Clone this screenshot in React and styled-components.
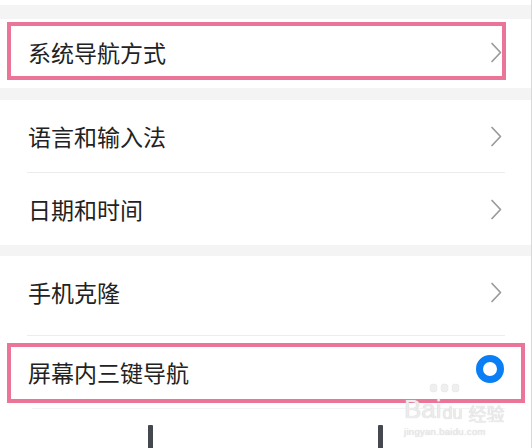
import styled, { createGlobalStyle } from 'styled-components';

const GlobalStyle = createGlobalStyle`
  html, body {
    margin: 0;
    padding: 0;
    background: #ffffff;
  }
  body {
    font-family: "Noto Sans CJK SC", "Noto Sans", sans-serif;
  }
`;

const Page = styled.div`
  position: relative;
  width: 532px;
  height: 448px;
  overflow: hidden;
  box-sizing: border-box;
  border-right: 1px solid #d9d9d9;
  background: #ffffff;
`;

const Gap = styled.div`
  height: ${(p) => p.h}px;
  background: #f4f4f4;
`;

const Card = styled.div`
  background: #ffffff;
  height: ${(p) => (p.h ? `${p.h}px` : 'auto')};
`;

const Row = styled.div`
  position: relative;
  height: ${(p) => p.h || 72}px;
  display: flex;
  align-items: center;
  justify-content: space-between;
  padding: 0 29px ${(p) => p.pb || 0}px 28px;
  box-sizing: border-box;
`;

const Label = styled.span`
  font-size: 23px;
  color: #222222;
  line-height: 1;
`;

const Divider = styled.div`
  height: 1px;
  margin: 0 26px 0 ${(p) => p.left || 27}px;
  background: ${(p) => p.color || '#ececec'};
`;

// pink annotation frame drawn over a row
const Highlight = styled.div`
  position: absolute;
  left: 7px;
  top: ${(p) => p.top}px;
  width: ${(p) => p.w}px;
  height: ${(p) => p.h}px;
  box-sizing: border-box;
  border: 4px solid #ea7599;
  pointer-events: none;
`;

const Radio = styled.span`
  width: 28px;
  height: 28px;
  box-sizing: border-box;
  border-radius: 50%;
  border: 7px solid #0a7ff5;
  margin-right: -2px;
  margin-top: -6px;
`;

const Preview = styled.div`
  display: flex;
  gap: 225px;
  padding: 16px 0 0 148px;
`;

const Bar = styled.div`
  width: 5px;
  height: 30px;
  background: #45484e;
  border-radius: 1px;
`;

const Watermark = styled.div`
  position: absolute;
  left: 404px;
  top: 384px;
  width: 110px;
  color: #ececec;
  font-family: "Liberation Sans", sans-serif;
  pointer-events: none;
  text-shadow: 0 0 1px #c8c8c8;
`;

const Paw = styled.div`
  display: flex;
  gap: 4px;
  padding-left: 26px;
  height: 12px;
`;

const Toe = styled.span`
  width: 7px;
  height: 8px;
  border-radius: 50%;
  background: #efefef;
  box-shadow: 0 0 1px #c8c8c8;
`;

const MarkLine = styled.div`
  display: flex;
  align-items: flex-end;
  gap: 1px;
  font-size: 26px;
  line-height: 1;
`;

const MarkDu = styled.span`
  font-size: 18px;
`;

const MarkCjk = styled.span`
  font-family: "Noto Sans CJK SC", sans-serif;
  font-size: 18px;
  margin-left: 5px;
`;

const MarkSub = styled.div`
  font-size: 9.5px;
  margin-top: 4px;
  letter-spacing: 0.3px;
`;

const Chevron = () => (
  <svg width="12" height="21" viewBox="0 0 12 21" fill="none">
    <path d="M2 1.5 L10.5 10.5 L2 19.5" stroke="#9a9a9a" strokeWidth="1.7" strokeLinecap="round" strokeLinejoin="round" />
  </svg>
);

export default function App() {
  return (
    <Page>
      <GlobalStyle />
      <Card h={5} />
      <Gap h={14} />
      <Card>
        <Row h={69} pb={2}>
          <Label>系统导航方式</Label>
          <Chevron />
          <Highlight top={3} w={499} h={58} />
        </Row>
      </Card>
      <Gap h={12} />
      <Card>
        <Row>
          <Label>语言和输入法</Label>
          <Chevron />
        </Row>
        <Divider />
        <Row>
          <Label>日期和时间</Label>
          <Chevron />
        </Row>
      </Card>
      <Gap h={11} />
      <Card>
        <Row h={79} pb={7}>
          <Label>手机克隆</Label>
          <Chevron />
        </Row>
        <Divider />
        <Row>
          <Label>屏幕内三键导航</Label>
          <Radio />
          <Highlight top={7} w={518} h={60} />
        </Row>
        <Divider left={32} color="#f3f3f3" />
        <Preview>
          <Bar />
          <Bar />
        </Preview>
      </Card>
      <Watermark>
        <Paw>
          <Toe />
          <Toe />
          <Toe />
        </Paw>
        <MarkLine>
          Bai<MarkDu>du</MarkDu>
          <MarkCjk>经验</MarkCjk>
        </MarkLine>
        <MarkSub>jingyan.baidu.com</MarkSub>
      </Watermark>
    </Page>
  );
}
